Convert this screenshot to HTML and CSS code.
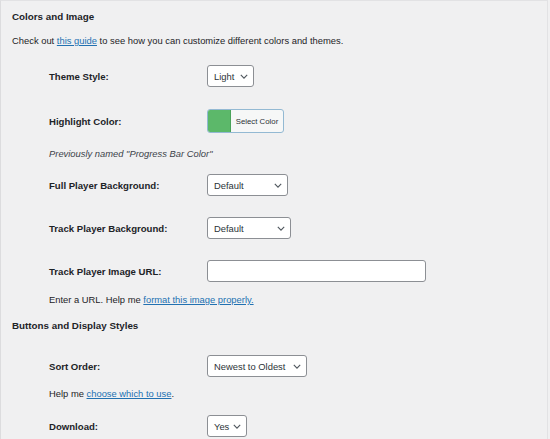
FILE: index.html
```html
<!DOCTYPE html>
<html>
<head>
<meta charset="utf-8">
<link rel="stylesheet" href="styles.css">
</head>
<body>
<div class="page">
  <h2 class="section-title first">Colors and Image</h2>
  <p class="intro">Check out <a href="#">this guide</a> to see how you can customize different colors and themes.</p>

  <div class="row r-theme">
    <span class="label">Theme Style:</span>
    <span class="select w-light">Light <svg class="chev" viewBox="0 0 10 6"><path d="M1 1l4 4 4-4"/></svg></span>
  </div>

  <div class="row r-highlight">
    <span class="label">Highlight Color:</span>
    <span class="color-btn"><span class="swatch"></span><span class="color-text">Select Color</span></span>
  </div>
  <p class="desc d-prev italic">Previously named "Progress Bar Color"</p>

  <div class="row r-full">
    <span class="label">Full Player Background:</span>
    <span class="select w-def1">Default <svg class="chev" viewBox="0 0 10 6"><path d="M1 1l4 4 4-4"/></svg></span>
  </div>

  <div class="row r-track">
    <span class="label">Track Player Background:</span>
    <span class="select w-def2">Default <svg class="chev" viewBox="0 0 10 6"><path d="M1 1l4 4 4-4"/></svg></span>
  </div>

  <div class="row r-image">
    <span class="label">Track Player Image URL:</span>
    <span class="input"></span>
  </div>
  <p class="desc d-enter">Enter a URL. Help me <a href="#">format this image properly.</a></p>

  <h2 class="section-title second">Buttons and Display Styles</h2>

  <div class="row r-sort">
    <span class="label">Sort Order:</span>
    <span class="select w-sort">Newest to Oldest <svg class="chev" viewBox="0 0 10 6"><path d="M1 1l4 4 4-4"/></svg></span>
  </div>
  <p class="desc d-help">Help me <a href="#">choose which to use</a>.</p>

  <div class="row r-download">
    <span class="label">Download:</span>
    <span class="select w-yes">Yes <svg class="chev" viewBox="0 0 10 6"><path d="M1 1l4 4 4-4"/></svg></span>
  </div>
</div>
</body>
</html>
```

FILE: styles.css
```css
html, body {
  margin: 0;
  padding: 0;
}
body {
  background: #f0f0f1;
  font-family: "Liberation Sans", Arial, sans-serif;
  font-size: 9.4px;
  color: #1d2327;
  width: 550px;
  height: 439px;
  overflow: hidden;
}
.page {
  box-sizing: border-box;
  width: 548px;
  height: 440px;
  border-top: 1px solid #e2e2e4;
  border-left: 1px solid #dcdcde;
  border-right: 1px solid #e2e2e4;
  padding-left: 11px;
  display: flex;
  flex-direction: column;
}
.section-title {
  font-size: 9.8px;
  font-weight: bold;
  margin: 0;
  line-height: 14px;
  color: #1d2327;
}
.section-title.first { margin-top: 9px; }
.intro {
  margin: 10px 0 0;
  line-height: 14px;
}
a {
  color: #2271b1;
  text-decoration: underline;
}
.row {
  display: grid;
  grid-template-columns: 158px auto;
  align-items: center;
  padding-left: 37px;
  justify-items: start;
}
.label {
  font-weight: bold;
  font-size: 9.6px;
}
.r-theme { margin-top: 17px; }
.r-highlight { margin-top: 22px; }
.r-full { margin-top: 13px; }
.r-track { margin-top: 21px; }
.r-image { margin-top: 21px; }
.r-sort { margin-top: 22px; }
.r-download { margin-top: 14px; }
.desc {
  margin: 12px 0 0 37px;
  line-height: 14px;
}
.d-prev { margin-top: 14px; }
.d-enter { margin-top: 11px; }
.d-help { margin-top: 10px; }
.section-title.second { margin-top: 12px; }
.italic { font-style: italic; color: #3c434a; }
.select {
  box-sizing: border-box;
  height: 22px;
  border: 1px solid #8c8f94;
  border-radius: 3px;
  background: #fff;
  color: #2c3338;
  display: flex;
  align-items: center;
  justify-content: space-between;
  padding: 0 5px 0 6px;
  white-space: nowrap;
}
.chev {
  width: 8px;
  height: 5px;
  margin-left: 4px;
  flex: none;
  fill: none;
  stroke: #50575e;
  stroke-width: 1.4;
}
.w-light { width: 47px; }
.w-def1 { width: 81px; }
.w-def2 { width: 84px; }
.w-sort { width: 100px; }
.w-yes { width: 40px; }
.color-btn {
  box-sizing: border-box;
  width: 77px;
  height: 24px;
  border: 1px solid #93b9d3;
  border-radius: 3px;
  background: #f6f7f7;
  display: flex;
  overflow: hidden;
}
.swatch {
  width: 22px;
  background: #5cb86a;
  border-right: 1px solid #4aa35a;
}
.color-text {
  flex: 1;
  display: flex;
  align-items: center;
  justify-content: center;
  font-size: 7.8px;
  color: #2c3338;
}
.input {
  box-sizing: border-box;
  width: 219px;
  height: 22px;
  border: 1px solid #8c8f94;
  border-radius: 3px;
  background: #fff;
}
```
